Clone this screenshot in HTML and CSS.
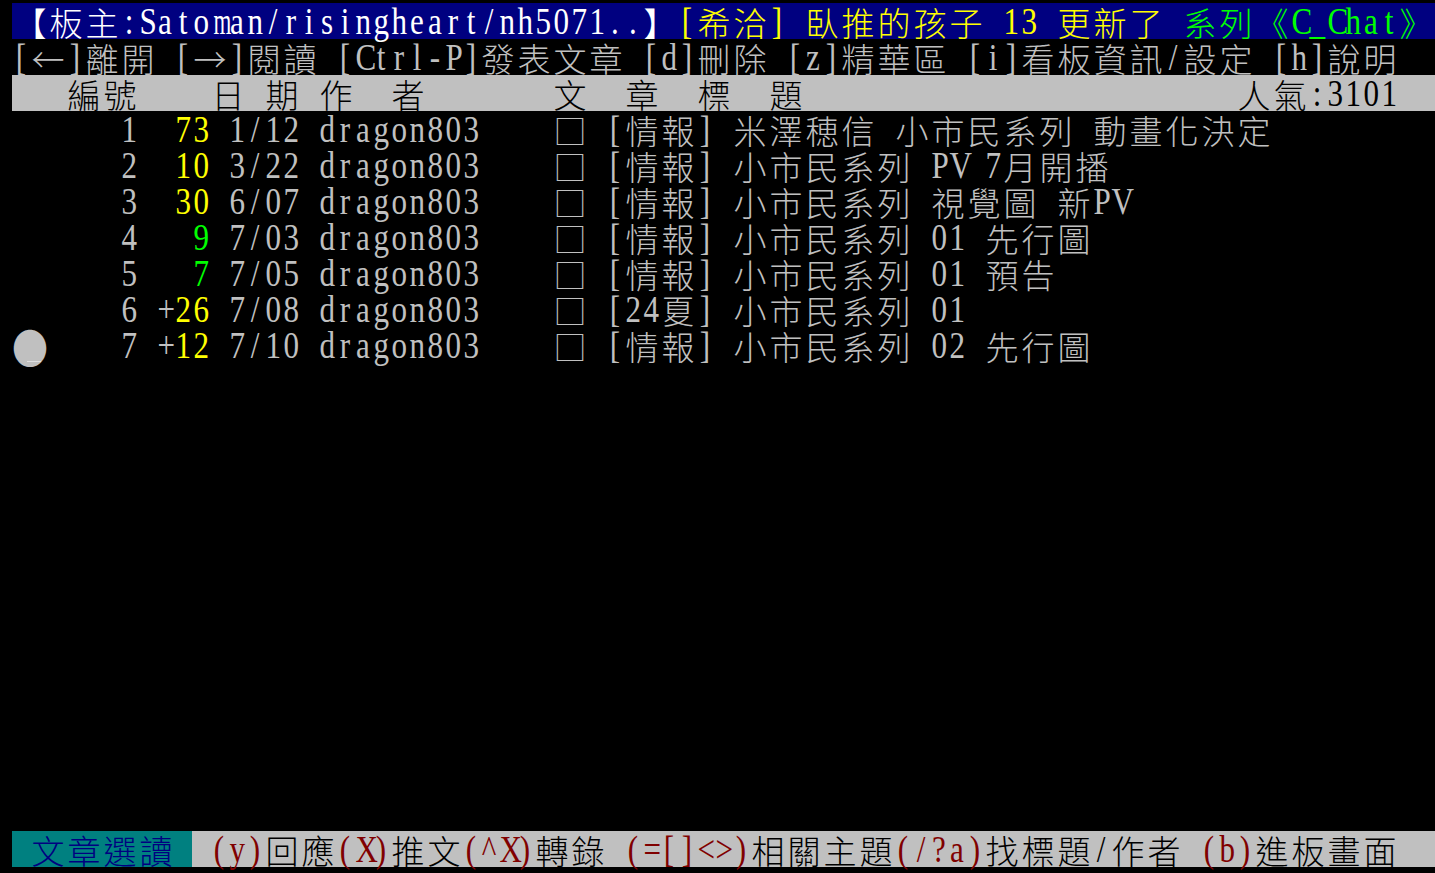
FILE: index.html
```html
<!DOCTYPE html>
<html lang="zh-Hant">
<head>
<meta charset="utf-8">
<title>C_Chat</title>
<link rel="stylesheet" href="styles.css">
</head>
<body>
<div class="term">
<div class="row bar-blue"><span class="seg fw">【板主:Satoman/risingheart/nh5071..】</span><span class="seg fy">[希洽] 臥推的孩子 13 更新了 </span><span class="seg fg">系列《C_Chat》</span></div>
<div class="row">[←]離開 [→]閱讀 [Ctrl-P]發表文章 [d]刪除 [z]精華區 [i]看板資訊/設定 [h]說明</div>
<div class="row bar-gray">   編號    日 期 作  者       文  章  標  題                        人氣:3101</div>
<div class="row">      1  <span class="seg fy">73</span> 1/12 dragon803    □ [情報] 米澤穂信 小市民系列 動畫化決定</div>
<div class="row">      2  <span class="seg fy">10</span> 3/22 dragon803    □ [情報] 小市民系列 PV 7月開播</div>
<div class="row">      3  <span class="seg fy">30</span> 6/07 dragon803    □ [情報] 小市民系列 視覺圖 新PV</div>
<div class="row">      4   <span class="seg fg">9</span> 7/03 dragon803    □ [情報] 小市民系列 01 先行圖</div>
<div class="row">      5   <span class="seg fg">7</span> 7/05 dragon803    □ [情報] 小市民系列 01 預告</div>
<div class="row">      6 +<span class="seg fy">26</span> 7/08 dragon803    □ [24夏] 小市民系列 01</div>
<div class="row"><span class="seg dot">●</span>    7 +<span class="seg fy">12</span> 7/10 dragon803    □ [情報] 小市民系列 02 先行圖<span class="cursor"></span></div>
<div class="row"></div>
<div class="row"></div>
<div class="row"></div>
<div class="row"></div>
<div class="row"></div>
<div class="row"></div>
<div class="row"></div>
<div class="row"></div>
<div class="row"></div>
<div class="row"></div>
<div class="row"></div>
<div class="row"></div>
<div class="row"></div>
<div class="row foot"><span class="seg foot-mode"> 文章選讀 </span><span class="seg foot-keys"> <span class="seg fr">(y)</span>回應<span class="seg fr">(X)</span>推文<span class="seg fr">(^X)</span>轉錄 <span class="seg fr">(=[]&lt;&gt;)</span>相關主題<span class="seg fr">(/?a)</span>找標題/作者 <span class="seg fr">(b)</span>進板畫面</span></div>
</div>
<script src="script.js"></script>
</body>
</html>
```

FILE: styles.css
```css
html, body {
  margin: 0;
  padding: 0;
  background: #000;
}
body {
  width: 1435px;
  height: 873px;
  overflow: hidden;
}
.term {
  padding: 3px 0 0 12px;
  width: 1440px;
}
.row {
  display: flex;
  height: 36px;
  color: #c0c0c0;
  position: relative;
}
.seg {
  display: flex;
}
.c {
  flex: none;
  width: 18px;
  height: 36px;
  text-align: center;
  line-height: 36px;
  white-space: pre;
  font-family: "Liberation Serif", serif;
  font-size: 37px;
  transform: translateY(0.5px) scaleX(0.84);
}
.c.n {
  transform: translateY(0.5px) scaleX(0.62);
}
.c.w {
  width: 36px;
  font-family: "Noto Sans CJK TC", sans-serif;
  font-weight: 300;
  font-size: 33px;
  transform: translateY(1px);
}
.bar-blue {
  background: #000080;
}
.bar-gray {
  background: #c0c0c0;
  color: #000;
}
.fw { color: #ffffff; }
.fy { color: #ffff00; }
.fg { color: #00ff00; }
.fr { color: #800000; }
.dot .c.w {
  font-size: 36px;
  transform: translateY(1px) scaleY(1.15);
}
.cursor {
  position: absolute;
  left: 15px;
  top: 34px;
  width: 14px;
  height: 1px;
  background: #e0e0e0;
}
.foot-mode {
  background: #008080;
  color: #000080;
}
.foot-keys {
  flex: 1;
  background: #c0c0c0;
  color: #000;
}
.foot-keys .fr {
  color: #800000;
}
```

FILE: script.js
```js
(function () {
  function isWide(ch) {
    return ch.codePointAt(0) >= 0x2000;
  }
  function split(node) {
    Array.prototype.slice.call(node.childNodes).forEach(function (child) {
      if (child.nodeType === 3) {
        var frag = document.createDocumentFragment();
        Array.from(child.textContent).forEach(function (ch) {
          var s = document.createElement('span');
          var cls = isWide(ch) ? 'c w' : 'c';
          if ('mwMW'.indexOf(ch) !== -1) cls += ' n';
          s.className = cls;
          s.textContent = ch;
          frag.appendChild(s);
        });
        node.replaceChild(frag, child);
      } else if (child.nodeType === 1) {
        split(child);
      }
    });
  }
  document.querySelectorAll('.row').forEach(split);
})();
```
